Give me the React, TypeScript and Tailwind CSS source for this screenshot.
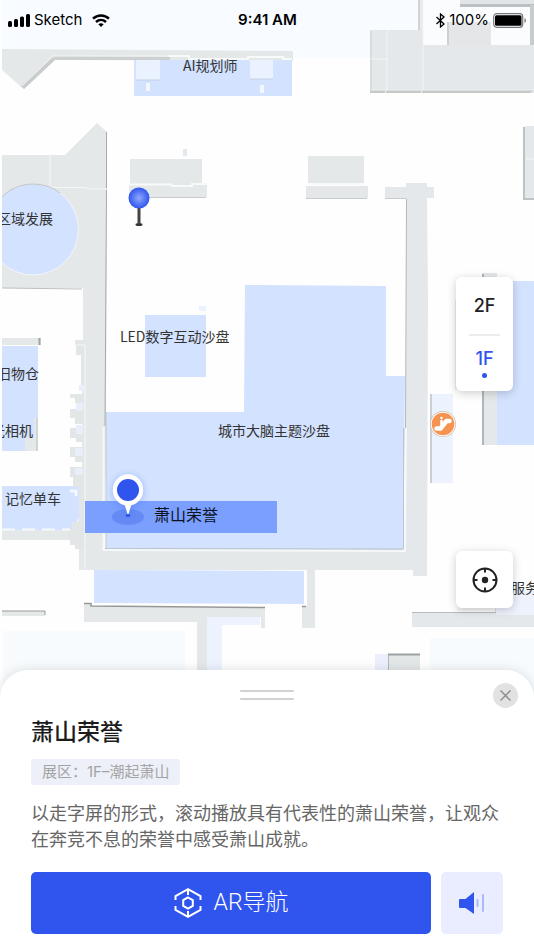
import { useState } from 'react'

const FLOORS = ['2F', '1F']

const LABELS = [
  { text: 'AI规划师', x: 183, y: 71 },
  { text: '区域发展', x: -3, y: 224 },
  { text: 'LED数字互动沙盘', x: 120, y: 342 },
  { text: '旧物仓', x: -3, y: 379 },
  { text: '光相机', x: -9, y: 436 },
  { text: '城市大脑主题沙盘', x: 218, y: 436 },
  { text: '记忆单车', x: 5, y: 504 },
  { text: '服务台', x: 511, y: 593 },
]

function FloorMap() {
  return (
    <svg viewBox="0 0 534 700" className="absolute inset-x-0 top-0 w-full" aria-label="展厅地图">
      <defs>
        <clipPath id="edge"><rect x="2" y="0" width="532" height="700" /></clipPath>
        <radialGradient id="ball">
          <stop offset="0" stopColor="#8fa9ff" />
          <stop offset="1" stopColor="#2f55ee" />
        </radialGradient>
        <filter id="pinShadow" x="-50%" y="-50%" width="200%" height="200%">
          <feDropShadow dx="0" dy="1" stdDeviation="3" floodColor="#2f55ee" floodOpacity="0.35" />
        </filter>
      </defs>
      <g clipPath="url(#edge)">
        <rect width="371" height="58" fill="#f8fbff" />
        <rect x="371" width="52" height="30" fill="#f8fbff" />
        <rect x="423" width="111" height="45" fill="#fbfcfe" />

        {/* top wall */}
        <path d="M2 49L293 51V61L55 60L24 89L2 70Z" fill="#e5e8e9" />
        <path d="M21 86L53 57L55 60L24 89Z" fill="#c9cccd" />
        <path d="M53 56L170 57V60H55Z" fill="#cdd0d0" />
        <path d="M2 70L22 88M22 86L53 56H168" stroke="#f3f4f4" fill="none" />
        <rect x="134" y="60" width="158" height="36" fill="#d2e2ff" />
        <path d="M168 56H189V59H248V57H283V59H292" stroke="#f8f9f9" strokeWidth="2" fill="none" />
        <path d="M136 60H160V80H136ZM250 60H273V79H250Z" fill="#ebf2ff" />
        <path d="M136 80H160M250 79H273" stroke="#c5d0de" />
        <path d="M146 83h4v8h-4zM260 85h4v8h-4z" fill="#f1f7fc" />

        {/* upper right rooms */}
        <path d="M418 0H423V30H418Z" fill="#e9ebed" />
        <path d="M419 0V30" stroke="#b9bcbd" />
        <path d="M460 0H534V6H460Z" fill="#e2e5e7" />
        <path d="M460 4H534V7H460Z" fill="#bdc0c2" />
        <path d="M530 5H534V45H530Z" fill="#c9cccd" />
        <path d="M447 22H491V45H447Z" fill="#e4e6e7" />
        <path d="M448 22V45" stroke="#b7babb" />
        <path d="M370 30H423V45H534V93H370Z" fill="#e4e8ea" />
        <path d="M370 90H534L530 93H370Z" fill="#c5c9c8" />
        <path d="M371 31V92" stroke="#cdd0d0" />
        <path d="M387 30V89L385 93M423 30V89L421 93M371 59H387M371 90H534" stroke="#f2f4f5" fill="none" />
        <path d="M523 128L525 126H534V200H523Z" fill="#e4e8ea" />
        <path d="M524 127V199H534" stroke="#bfc2c3" strokeWidth="2" fill="none" />
        <path d="M526 159H534" stroke="#f4f5f5" />

        {/* free standing blocks */}
        <path d="M130 159H202V184H130ZM129 184H207V197H129ZM308 156H364V184H308ZM306 186H368V198H306Z" fill="#e5e8e9" />
        <path d="M129 197.500H206M306 198.500H367" stroke="#c9cccc" />
        <path d="M129 184.500H172V186H192V184H207M308 184H364" stroke="#f8f9f9" strokeWidth="2" fill="none" />
        <rect x="183" y="149" width="4" height="7" fill="#dfe9ee" />

        {/* left hall */}
        <path d="M2 155H65L97 123L107 132V190L106 425L104 551H427V570H79V545L70 540H2V530H70L79 520V490H82V340H83V288H2Z" fill="#e5e8e9" />
        <path d="M106.500 132V189M106.500 190L105 426" stroke="#a6a9ab" />
        <path d="M2 288L82 289" stroke="#bcc0c0" />
        <path d="M50 155V187M50 187.500H87V189H107" stroke="#f5f6f6" fill="none" />
        <circle cx="33" cy="229.500" r="45.500" fill="#d2e2ff" stroke="#f4f6f7" />
        <path d="M2 197C18 180 45 181 60 193" stroke="#bcc1c4" fill="none" />
        <path d="M2 338H41V345H2Z" fill="#e5e8e9" />
        <path d="M39.500 338V345" stroke="#9ea1a2" strokeWidth="2" />
        <rect x="2" y="346" width="36" height="105" fill="#d2e2ff" />
        <path d="M34 418H38V451H25V438H34Z" fill="#e5e8e9" />
        <path d="M37 418V451" stroke="#bfc2c2" />
        <path d="M2 486H79V518L72 530H2Z" fill="#d2e2ff" />
        <path d="M75 340H85V345H75ZM76 345H85V355H76ZM81 355H85V390H81ZM70 394H85V398H70ZM75 398H85V403H75ZM70 409H85V418H70ZM75 418H85V424H75ZM70 428H85V438H70ZM76 438H85V442H76ZM70 447H85V457H70ZM75 457H85V462H75ZM70 467H85V477H70ZM73 477H85V487H73ZM79 485H85V524H79ZM72 522H85V530H72ZM68 529H85V540H68ZM70 540H85V545H70ZM75 545H85V549H75Z" fill="#e3e6e7" />
        <path d="M79 385h5v6h-5zM76 403h7v8h-7zM76 425h7v9h-7zM75 448h8v8h-8zM75 468h8v7h-8z" fill="#e9effa" />
        <path d="M70 491H76V496" stroke="#f4f8ff" strokeWidth="3" fill="none" />
        <path d="M2 529.500H70" stroke="#f8fafa" strokeDasharray="13 7" strokeWidth="2" />
        <path d="M76 345H85V569" stroke="#f6f7f7" fill="none" />
        <path d="M2 611H45V616H2Z" fill="#e5e8e9" />
        <path d="M2 611H45V615" stroke="#999a98" fill="none" />

        {/* central hall */}
        <path d="M406 183H427V198L428 300L427 576H413V570H403V551H406ZM385 187H434V198H385Z" fill="#e4e8ea" />
        <path d="M385 198.500H406" stroke="#c9cccc" />
        <path d="M406.500 199L405.500 428M404 428L403 549L105 548.500" stroke="#b4b8b9" fill="none" />
        <path d="M245 285L386 286V376H405L403 549L106 548V412H244Z" fill="#d2e2ff" />
        <path d="M406 428L405 551L103.500 550V427" stroke="#f5f7f8" strokeWidth="2" fill="none" />
        <path d="M403.500 428V549L106 548.500V412" stroke="#bcc5d2" fill="none" />
        <rect x="145" y="315" width="61" height="62" fill="#d2e2ff" />
        <rect x="199" y="306" width="7" height="5" fill="#eaf2fd" />
        <path d="M94 570L304 571V604L94 603Z" fill="#d2e2ff" />
        <path d="M307 570H315V628H302V606H307Z" fill="#e5e8e9" />
        <path d="M84 603H91V606L265 608V628H261V617H207V672H197V622H84Z" fill="#e5e8e9" />
        <path d="M84 603.500H91V606L265 607.500M302 606.500H306" stroke="#969896" strokeWidth="1.500" fill="none" />
        <path d="M207 617H260V625H222V672H207Z" fill="#edf3fe" />
        <path d="M3 631H185V700H3ZM430 638H534V700H430Z" fill="#f7fbfd" />
        <path d="M375 654H388V680H375Z" fill="#ebf0fc" />
        <path d="M388 654H420V680H388Z" fill="#e3e7e7" />
        <path d="M388.500 680V654.500" stroke="#b5b8b8" />
        <path d="M388 654.500H420" stroke="#9da1a0" strokeWidth="2" />

        {/* right wing */}
        <path d="M430 394H453V483H430Z" fill="#edf3fe" />
        <path d="M431 394V483" stroke="#bfc2c5" strokeWidth="1.500" />
        <path d="M482 273H497V445H482Z" fill="#e4e8ea" />
        <path d="M483 274V445" stroke="#b3b6b8" strokeWidth="2" />
        <rect x="497" y="281" width="37" height="164" fill="#d2e2ff" />
        <path d="M456 300V390" stroke="#dedfe2" />
        <path d="M412 612H534V627H412Z" fill="#e4e8ea" />
        <path d="M412 612.500H496V606" stroke="#b8bbbc" fill="none" />
        <path d="M496 590H534V615H496Z" fill="#eef2fd" />
        <path d="M457 603H494V611H457Z" fill="#f4f4f4" />
      </g>

      <rect x="85" y="501" width="192" height="32" fill="#7a9fff" />
      <g clipPath="url(#edge)" fill="#333" fontSize="14" fontFamily="'Noto Sans CJK SC', sans-serif">
        {LABELS.map(l => <text key={l.text} x={l.x} y={l.y}>{l.text}</text>)}
      </g>
      <text x="154" y="521" fontSize="16" fill="#0c1222" fontFamily="'Noto Sans CJK SC', sans-serif">萧山荣誉</text>

      {/* escalator */}
      <circle cx="443" cy="424" r="13" fill="#cdb9a6" />
      <circle cx="443" cy="424" r="12.300" fill="#fff" />
      <circle cx="443" cy="424" r="11.300" fill="#f79350" />
      <path d="M436.500 428.500H440.500L446.500 421H449.500" stroke="#fff" strokeWidth="4.500" strokeLinecap="round" strokeLinejoin="round" fill="none" />
      <path d="M441.500 420V426" stroke="#fff" strokeWidth="2.500" />
      <circle cx="441.500" cy="418" r="1.300" fill="#fff" />

      {/* current position */}
      <ellipse cx="139" cy="224.500" rx="3.500" ry="1.500" fill="#333" />
      <path d="M139 206V224" stroke="#444" strokeWidth="3" />
      <circle cx="139" cy="198" r="10.500" fill="url(#ball)" />

      {/* selected exhibit */}
      <ellipse cx="128" cy="517" rx="16" ry="8" fill="#668af3" />
      <ellipse cx="128" cy="515.500" rx="2.500" ry="1.500" fill="#2f55ee" />
      <path d="M128 474A16 16 0 0 1 131 505.500L128.500 514H127.500L125 505.500A16 16 0 0 1 128 474Z" fill="#fff" filter="url(#pinShadow)" />
      <circle cx="128" cy="490" r="11" fill="#2f55ee" />
    </svg>
  )
}

function StatusBar() {
  return (
    <header className="relative grid h-10 grid-cols-3 items-center pl-2 pr-[7px] text-[15px] leading-5 text-black">
      <div className="flex items-center gap-1">
        <svg width="22" height="13" viewBox="0 0 22 13" fill="currentColor">
          <rect x="0" y="7" width="4" height="6" rx="1.500" />
          <rect x="6" y="5" width="4" height="8" rx="1.500" />
          <rect x="12" y="2.500" width="4" height="10.500" rx="1.500" />
          <rect x="18" y="0" width="4" height="13" rx="1.500" />
        </svg>
        <span>Sketch</span>
        <svg width="18" height="13" viewBox="0 0 18 13" fill="none" stroke="currentColor" strokeWidth="2.500" className="ml-1.5">
          <path d="M1 4.700C5.500 0.300 12.500 0.300 17 4.700" />
          <path d="M4 8C7 5.200 11 5.200 14 8" />
          <path d="M6.300 10.200C8 8.800 10 8.800 11.700 10.200L9 13Z" fill="currentColor" stroke="none" />
        </svg>
      </div>
      <div className="text-center font-semibold">9:41 AM</div>
      <div className="flex items-center justify-end gap-1">
        <svg width="9" height="15" viewBox="0 0 9 15" fill="none" stroke="currentColor" strokeWidth="1.300">
          <path d="M0.500 4L8 11L4.500 14V1L8 4L0.500 11" />
        </svg>
        <span>100%</span>
        <svg width="34" height="15" viewBox="0 0 34 15">
          <rect x="0.700" y="0.700" width="29" height="13.600" rx="3" fill="none" stroke="#777" strokeWidth="1.200" />
          <rect x="2" y="2.300" width="26.500" height="10.400" rx="1.500" />
          <path d="M31.500 5C33.500 6 33.500 9 31.500 10Z" fill="#777" />
        </svg>
      </div>
    </header>
  )
}

export default function App() {
  const [floor, setFloor] = useState('1F')
  const [open, setOpen] = useState(true)

  return (
    <main className="relative flex min-h-screen flex-col overflow-hidden bg-[#fefefe] font-['Inter','Noto_Sans_CJK_SC',sans-serif]">
      <FloorMap />
      <StatusBar />

      <div className="relative flex flex-1 flex-col items-end justify-between pb-[62px] pr-[21px] pt-[237px]">
        <div className="flex w-[57px] flex-col items-center rounded-md bg-white shadow-[0_2px_10px_rgba(0,0,0,0.2)]">
          {FLOORS.map((f, i) => {
            const active = f === floor
            return (
              <button key={f} type="button" onClick={() => setFloor(f)}
                className={`relative flex h-[57px] w-full flex-col items-center justify-center text-lg font-medium leading-6 ${active ? 'text-[#2f55ee]' : 'text-[#222]'}`}>
                {i > 0 && <span className="absolute top-0 h-0.5 w-[31px] bg-[#ececec]" />}
                <span>{f}</span>
                {active && <span className="mt-0.5 size-[5px] rounded-full bg-[#2f55ee]" />}
              </button>
            )
          })}
        </div>

        <button type="button" aria-label="定位"
          className="flex size-[57px] items-center justify-center rounded-md bg-white shadow-[0_2px_10px_rgba(0,0,0,0.2)]">
          <svg width="26" height="26" viewBox="0 0 26 26" fill="none" stroke="#222" strokeWidth="2">
            <circle cx="13" cy="13" r="11.500" />
            <path d="M13 1V5.500M13 20.500V25M1 13H5.500M20.500 13H25" />
            <circle cx="13" cy="13" r="3.200" fill="#222" stroke="none" />
          </svg>
        </button>
      </div>

      {open && (
        <section className="relative rounded-t-[28px] bg-white px-[31px] pb-4 pt-5 shadow-[0_0_12px_rgba(0,0,0,0.12)]">
          <div className="mx-auto flex w-[54px] flex-col gap-[6px]">
            <span className="h-0.5 rounded-full bg-[#d2d2d2]" />
            <span className="h-0.5 rounded-full bg-[#d2d2d2]" />
          </div>
          <button type="button" aria-label="关闭" onClick={() => setOpen(false)}
            className="absolute right-4 top-[13px] flex size-[25px] items-center justify-center rounded-full bg-[#e2e2e2]">
            <svg width="11" height="11" viewBox="0 0 11 11" stroke="#8a8a8a" strokeWidth="1.400">
              <path d="M0.500 0.500L10.500 10.500M10.500 0.500L0.500 10.500" />
            </svg>
          </button>

          <h1 className="mt-4 text-[23px] font-medium leading-8 text-[#1c1c1c]">萧山荣誉</h1>
          <div className="mt-[11px] flex">
            <span className="rounded-[3px] bg-[#edf0f8] px-[11px] text-[15px] leading-[26px] text-[#a3a3a3]">展区：1F–潮起萧山</span>
          </div>
          <p className="mt-4 text-lg leading-[26px] text-[#666]">
            以走字屏的形式，滚动播放具有代表性的萧山荣誉，让观众在奔竞不息的荣誉中感受萧山成就。
          </p>

          <div className="mt-[19px] flex gap-[10px]">
            <button type="button" className="flex h-[62px] flex-1 items-center justify-center gap-3 rounded-[5px] bg-[#2f55ee] font-['Roboto','Noto_Sans_CJK_SC',sans-serif] text-[23px] font-light leading-8 text-white">
              <svg width="28" height="30" viewBox="0 0 28 30" fill="none" stroke="currentColor" strokeWidth="2">
                <path d="M1.500 12V8L14 1.200L26.500 8V12M1.500 18V22L14 28.800L26.500 22V18" />
                <path d="M14 1V7M14 23V29" />
                <path d="M14 9.500L18.800 12.200V17.800L14 20.500L9.200 17.800V12.200Z" />
              </svg>
              <span>AR导航</span>
            </button>
            <button type="button" aria-label="语音播报" className="flex size-[62px] items-center justify-center rounded-[5px] bg-[#e9edff]">
              <svg width="26" height="24" viewBox="0 0 26 24">
                <path d="M1 8H6.500L15 1V23L6.500 17H1Q0 17 0 16V9Q0 8 1 8Z" fill="#2f55ee" />
                <rect x="17.500" y="8" width="2" height="8" rx="1" fill="#a9b9fa" />
                <rect x="23" y="3" width="2" height="18" rx="1" fill="#a9b9fa" />
              </svg>
            </button>
          </div>
        </section>
      )}
    </main>
  )
}
